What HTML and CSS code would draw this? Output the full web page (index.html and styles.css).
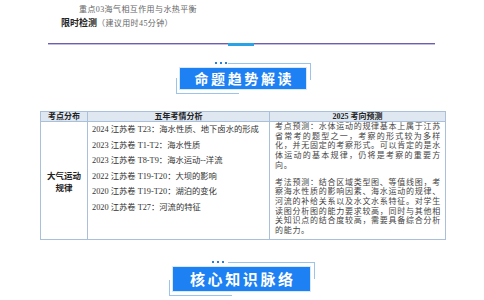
FILE: index.html
```html
<!DOCTYPE html>
<html lang="zh">
<head>
<meta charset="utf-8">
<link rel="stylesheet" href="styles.css">
</head>
<body>
<div class="page">
  <div class="toc">
    <p class="toc-item">重点02海水的性质与海水运动规律</p>
    <p class="toc-item">重点03海气相互作用与水热平衡</p>
    <p class="toc-test"><b>限时检测</b><span>（建议用时45分钟）</span></p>
  </div>
  <div class="rule"></div>

  <div class="banner-row row1">
    <div class="banner b1">命题趋势解读<span class="dots"></span></div>
  </div>

  <table class="grid">
    <colgroup>
      <col class="c1"><col class="c2"><col class="c3">
    </colgroup>
    <thead>
      <tr><th>考点分布</th><th>五年考情分析</th><th>2025 考向预测</th></tr>
    </thead>
    <tbody>
      <tr class="body-row">
        <td class="topic"><span class="topic-line">大气运动</span><span class="topic-line">规律</span></td>
        <td class="history">
          <p>2024 江苏卷 T23：海水性质、地下卤水的形成</p>
          <p>2023 江苏卷 T1-T2：海水性质</p>
          <p>2023 江苏卷 T8-T9：海水运动--洋流</p>
          <p>2022 江苏卷 T19-T20：大坝的影响</p>
          <p>2020 江苏卷 T19-T20：湖泊的变化</p>
          <p>2020 江苏卷 T27：河流的特征</p>
        </td>
        <td class="forecast">
          <p>考点预测：水体运动的规律基本上属于江苏省常考的题型之一，考察的形式较为多样化，并无固定的考察形式。可以肯定的是水体运动的基本规律，仍将是考察的重要方向。</p>
          <p>考法预测：结合区域类型图、等值线图，考察海水性质的影响因素、海水运动的规律、河流的补给关系以及水文水系特征。对学生读图分析图的能力要求较高，同时与其他相关知识点的结合度较高，需要具备综合分析的能力。</p>
        </td>
      </tr>
    </tbody>
  </table>

  <div class="banner-row row2">
    <div class="banner b2">核心知识脉络<span class="dots"></span></div>
  </div>
</div>
</body>
</html>
```

FILE: styles.css
```css
* { box-sizing: border-box; }
html, body { margin: 0; padding: 0; background: #fff; }
body {
  width: 484px;
  height: 300px;
  overflow: hidden;
  font-family: "Liberation Serif", "Noto Sans CJK SC", serif;
}
.page { width: 484px; }
p { margin: 0; }

.toc { margin-top: -10px; }
.toc-item {
  padding-left: 79px;
  font: 8px/13px "Liberation Serif", "Noto Sans CJK SC", serif;
  letter-spacing: 0.4px;
  color: #666;
}
.toc-test {
  padding-left: 61px;
  font: 8px/14px "Liberation Serif", "Noto Sans CJK SC", serif;
  color: #666;
  letter-spacing: 0.4px;
}
.toc-test b {
  font-family: "Noto Sans CJK SC", sans-serif;
  font-size: 9px;
  font-weight: 700;
  color: #222;
  letter-spacing: 0;
}

.rule {
  margin: 12px 0 0 48px;
  width: 387px;
  height: 3px;
  background:
    linear-gradient(to right, transparent 180px, #2aa2e6 180px, #2aa2e6 206px, transparent 206px),
    linear-gradient(#6d5eae 0, #6d5eae 1px, #c4bde0 1px, #c4bde0 2px, transparent 2px);
}

.banner-row { display: flex; }
.row1 { margin-top: 22px; padding-left: 180px; }
.row2 { margin-top: 27px; padding-left: 173px; }

.banner {
  position: relative;
  background: #1d80f3;
  color: #fff;
  font-family: "Noto Sans CJK SC", sans-serif;
  font-weight: 700;
  text-align: center;
  box-shadow: 0 0 0 1px #d6e8fa;
}
.b1 {
  width: 126px;
  height: 21px;
  font-size: 14px;
  line-height: 21px;
  letter-spacing: 2.6px;
  padding-left: 2.6px;
}
.b2 {
  width: 137px;
  height: 24px;
  font-size: 15px;
  line-height: 24px;
  letter-spacing: 2.6px;
  padding-left: 2.6px;
}
.banner::before {
  content: "";
  position: absolute;
  top: -5px;
  left: 48px;
  right: -5px;
  height: 16px;
  border-top: 1px solid #9cc4ea;
  border-right: 1px solid #9cc4ea;
}
.banner::after {
  content: "";
  position: absolute;
  left: -4px;
  bottom: -5px;
  width: 62px;
  height: 15px;
  border-left: 1px solid #9cc4ea;
  border-bottom: 1px solid #9cc4ea;
}
.dots {
  position: absolute;
  top: -6px;
  left: 35px;
  width: 12px;
  height: 2px;
  background: repeating-linear-gradient(to right, #2b7fd8 0, #2b7fd8 2px, transparent 2px, transparent 5px);
}
.b2 .dots { left: 39px; }
.b2::before { left: 55px; }

.grid {
  margin: 22px 0 0 40px;
  width: 405px;
  border-collapse: collapse;
  table-layout: fixed;
}
.c1 { width: 47px; }
.c2 { width: 182px; }
.c3 { width: 176px; }
.grid th, .grid td {
  border: 1px solid #aabfd9;
  padding: 0;
}
.grid th {
  height: 10px;
  background: #dfe7f1;
  font: 700 8px/9px "Liberation Serif", "Noto Sans CJK SC", serif;
  color: #222;
  text-align: center;
}
.body-row { height: 118px; }
.topic {
  vertical-align: middle;
  text-align: center;
  font: 700 8.5px/12px "Noto Sans CJK SC", sans-serif;
  color: #222;
}
.topic-line { display: block; }
.history {
  vertical-align: top;
  padding-left: 4px !important;
  font-size: 8.3px;
  line-height: 15.6px;
  color: #333;
  white-space: nowrap;
}
.forecast {
  vertical-align: top;
  padding: 0 4px 0 5px !important;
  font-size: 8px;
  line-height: 9.7px;
  letter-spacing: 0.7px;
  color: #444;
  text-align: justify;
}
.forecast p + p { margin-top: 7px; }
```
